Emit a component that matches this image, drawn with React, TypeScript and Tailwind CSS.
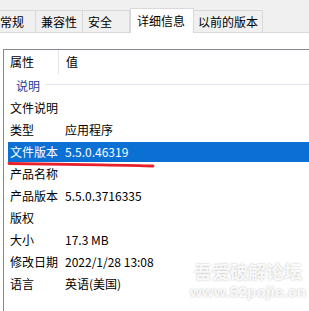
import React from "react";

const rows: [string, string][] = [
  ["文件说明", ""],
  ["类型", "应用程序"],
  ["文件版本", "5.5.0.46319"],
  ["产品名称", ""],
  ["产品版本", "5.5.0.3716335"],
  ["版权", ""],
  ["大小", "17.3 MB"],
  ["修改日期", "2022/1/28 13:08"],
  ["语言", "英语(美国)"],
];

export default function App() {
  return (
    <div
      className="relative w-[309px] h-[311px] overflow-hidden bg-[#f0f0f0] flex flex-col text-[12px] text-black"
      style={{ fontFamily: '"Microsoft YaHei", "Noto Sans CJK SC", "Noto Sans", sans-serif' }}
    >
      {/* tabs */}
      <div className="h-[32px] flex items-end pt-[8px] shrink-0">
        <div className="relative flex items-end h-[24px] ml-[-14px]">
          <div className="h-[22px] w-[50px] border border-[#d9d9d9] border-b-0 bg-[#f0f0f0] flex items-center pl-[13px] leading-none">常规</div>
          <div className="h-[22px] w-[47px] border border-l-0 border-[#d9d9d9] border-b-0 bg-[#f0f0f0] flex items-center pl-[5px] leading-none">兼容性</div>
          <div className="h-[22px] w-[47px] border border-l-0 border-[#d9d9d9] border-b-0 bg-[#f0f0f0] flex items-center pl-[5px] leading-none">安全</div>
          <div className="h-[25px] w-[64px] -mb-[1px] z-10 border border-[#d9d9d9] border-b-0 bg-white flex items-center pl-[6px] pb-[1px] leading-none">详细信息</div>
          <div className="h-[22px] w-[69px] border border-l-0 border-[#d9d9d9] border-b-0 bg-[#f0f0f0] flex items-center pl-[4px] leading-none">以前的版本</div>
        </div>
      </div>
      {/* page */}
      <div className="flex-1 bg-white border-t border-[#d9d9d9] flex flex-col pt-[16px] pl-[3px]">
        <div className="flex-1 border-l border-t border-[#828790] bg-white flex flex-col">
          <div className="h-[24px] flex items-center shrink-0">
            <div className="w-[55px] h-full border-r border-[#e5e5e5] flex items-center pl-[6px]">属性</div>
            <div className="pl-[7px]">值</div>
          </div>
          <div className="h-[23px] flex items-center pl-[12px] shrink-0">
            <span className="text-[#1e3a96]">说明</span>
            <div className="flex-1 h-px bg-[#e2e6ee] ml-[5px] -mt-[2px]"></div>
          </div>
          {rows.map(([k, v], i) => (
            <div key={i} className="h-[22px] flex pl-[4px] shrink-0">
              <div
                className={
                  i === 2
                    ? "flex-1 flex items-center bg-[#0a70d4] text-white my-[1px]"
                    : "flex-1 flex items-center"
                }
              >
                <div className="w-[57px] pl-[2px] whitespace-nowrap">{k}</div>
                <div className="whitespace-nowrap">{v}</div>
              </div>
            </div>
          ))}
        </div>
      </div>

      {/* red underline annotation */}
      <svg className="absolute left-0 top-0 pointer-events-none" width="309" height="311">
        <path d="M9 163.5 Q 60 164.2 100 164.8 T 153 166" stroke="#e8202a" strokeWidth="2.8" fill="none" strokeLinecap="round" />
      </svg>

      {/* watermark */}
      <div className="absolute left-[190px] top-[259px] flex flex-col items-center pointer-events-none text-white/90 [text-shadow:0_0_2px_rgba(0,0,0,0.3)] font-bold">
        <div className="text-[18px] leading-[24px] tracking-[0px]">吾爱破解论坛</div>
        <div className="text-[15px] leading-[17px] tracking-[0.3px]" style={{ fontFamily: '"Liberation Sans", sans-serif' }}>www.52pojie.cn</div>
      </div>
    </div>
  );
}
